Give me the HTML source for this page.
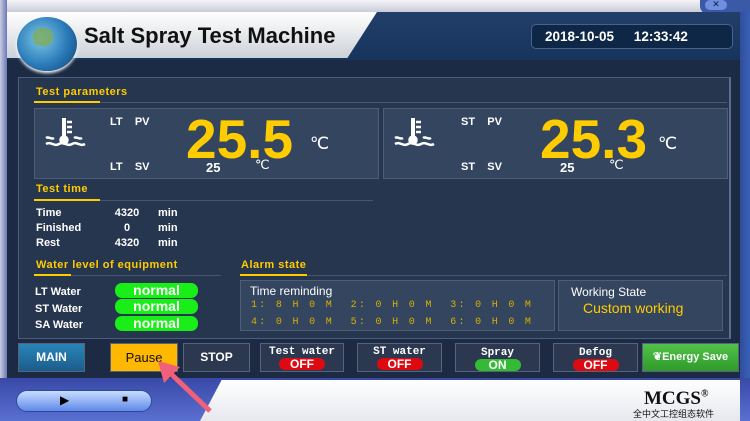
<!DOCTYPE html>
<html><head><style>
*{margin:0;padding:0;box-sizing:border-box}
body{width:750px;height:421px;overflow:hidden;background:#1c2a44;font-family:"Liberation Sans",sans-serif;position:relative}
.a{position:absolute}
.w{color:#fff;font-weight:bold;font-size:11px}
.y{color:#ffcc00;font-weight:bold;font-size:11px;letter-spacing:.5px}
.box{background:#34455f;border:1px solid #4d5d78}
.btn{position:absolute;top:343px;height:29px;background:#2b3850;border:1px solid #56637a;color:#fff;font-weight:bold;text-align:center}
.pill{position:absolute;left:115px;width:83px;height:15px;background:#19ee19;border-radius:7px;color:#fff;font-weight:bold;font-size:14px;line-height:15px;text-align:center}
.off{display:inline-block;width:46px;height:12px;border-radius:6px;background:#dd0a12;color:#fff;font-size:12px;line-height:12px;font-family:"Liberation Sans",sans-serif}
.sm{font-family:"Liberation Mono",monospace;font-size:11px;line-height:12px}
.am{position:absolute;font-size:10px;color:#d8b000;font-family:"Liberation Mono",monospace;letter-spacing:2.3px}
.big{position:absolute;font-size:55px;line-height:1;font-weight:bold;color:#ffcc00;top:112px}
</style></head><body>
<div class="a" style="left:0;top:0;width:750px;height:12px;background:linear-gradient(#f4f4f8,#c9ccd8)"></div>
<div class="a" style="left:700px;top:0;width:50px;height:14px;background:#3a5aa8;border-radius:0 0 0 8px"></div>
<div class="a" style="left:705px;top:0;width:22px;height:10px;background:#6f8ee0;border-radius:6px;color:#123;font-size:9px;text-align:center;line-height:9px">✕</div>
<div class="a" style="left:0;top:0;width:7px;height:385px;background:linear-gradient(90deg,#c8ccdf,#6b78b8)"></div>
<div class="a" style="left:740px;top:12px;width:10px;height:375px;background:linear-gradient(90deg,#2e4f9a,#3a5fb8)"></div>
<div class="a" style="left:7px;top:12px;width:733px;height:48px;background:linear-gradient(#213f6a,#16345c)"></div>
<div class="a" style="left:7px;top:12px;width:370px;height:46px;background:linear-gradient(#ffffff,#cdd2d8);clip-path:polygon(0 0,100% 0,92% 100%,0 100%)"></div>
<div class="a" style="left:17px;top:17px;width:60px;height:54px;border-radius:50%;background:radial-gradient(circle at 40% 40%,#7cc8e8,#2a7ab8 55%,#0d3f70);box-shadow:0 2px 3px #fff"></div>
<div class="a" style="left:33px;top:28px;width:20px;height:18px;border-radius:40%;background:#7eab5a;opacity:.8"></div>
<div class="a" style="left:84px;top:23px;font-size:22px;font-weight:bold;color:#111">Salt Spray Test Machine</div>
<div class="a" style="left:531px;top:24px;width:202px;height:25px;border:1px solid #4a6288;border-radius:5px;background:#0f2746;color:#fff;font-weight:bold;font-size:13.5px;line-height:23px;padding-left:13px;word-spacing:16px">2018-10-05 12:33:42</div>
<div class="a" style="left:18px;top:77px;width:713px;height:262px;background:#27364f;border:1px solid #4c5e80;border-right:2px solid #5a6c90"></div>
<div class="a y" style="left:36px;top:86px">Test parameters</div>
<div class="a" style="left:34px;top:101px;width:66px;height:2px;background:#ffcc00"></div>
<div class="a" style="left:100px;top:102px;width:627px;height:1px;background:#46566f"></div>
<div class="a box" style="left:34px;top:108px;width:345px;height:71px"></div>
<div class="a box" style="left:383px;top:108px;width:345px;height:71px"></div>
<svg class="a" style="left:44px;top:115px" width="46" height="36" viewBox="0 0 46 36" fill="none" stroke="#fff" stroke-width="2.5">
<path d="M20 3v22" stroke-width="4"/><circle cx="20" cy="25" r="3.5" fill="#fff"/><path d="M23 7h5M23 12h5M23 17h5"/>
<path d="M2 23c3-2 5 2 8 0M30 23c3-2 5 2 8 0M2 29c5-3 8 3 13 0s8 3 13 0 8 3 13 0"/></svg>
<svg class="a" style="left:393px;top:115px" width="46" height="36" viewBox="0 0 46 36" fill="none" stroke="#fff" stroke-width="2.5">
<path d="M20 3v22" stroke-width="4"/><circle cx="20" cy="25" r="3.5" fill="#fff"/><path d="M23 7h5M23 12h5M23 17h5"/>
<path d="M2 23c3-2 5 2 8 0M30 23c3-2 5 2 8 0M2 29c5-3 8 3 13 0s8 3 13 0 8 3 13 0"/></svg>
<div class="a w" style="left:110px;top:116px">LT&nbsp;&nbsp;&nbsp;&nbsp;PV</div>
<div class="a w" style="left:110px;top:161px">LT&nbsp;&nbsp;&nbsp;&nbsp;SV</div>
<div class="a w" style="left:461px;top:116px">ST&nbsp;&nbsp;&nbsp;&nbsp;PV</div>
<div class="a w" style="left:461px;top:161px">ST&nbsp;&nbsp;&nbsp;&nbsp;SV</div>
<div class="big" style="left:186px">25.5</div>
<div class="big" style="left:540px">25.3</div>
<div class="a" style="left:310px;top:134px;color:#fff;font-size:17px">℃</div>
<div class="a" style="left:658px;top:134px;color:#fff;font-size:17px">℃</div>
<div class="a w" style="left:206px;top:160px;font-size:13px">25</div>
<div class="a w" style="left:560px;top:160px;font-size:13px">25</div>
<div class="a" style="left:255px;top:157px;color:#fff;font-size:13px">℃</div>
<div class="a" style="left:609px;top:157px;color:#fff;font-size:13px">℃</div>
<div class="a y" style="left:36px;top:183px">Test time</div>
<div class="a" style="left:34px;top:199px;width:66px;height:2px;background:#ffcc00"></div>
<div class="a" style="left:100px;top:200px;width:273px;height:1px;background:#46566f"></div>
<div class="a w" style="left:36px;top:206px;line-height:15px">Time<br>Finished<br>Rest</div>
<div class="a w" style="left:110px;top:206px;line-height:15px;text-align:center;width:34px">4320<br>0<br>4320</div>
<div class="a w" style="left:158px;top:206px;line-height:15px">min<br>min<br>min</div>
<div class="a y" style="left:36px;top:259px">Water level of equipment</div>
<div class="a" style="left:34px;top:274px;width:37px;height:2px;background:#ffcc00"></div>
<div class="a" style="left:71px;top:275px;width:150px;height:1px;background:#46566f"></div>
<div class="a y" style="left:241px;top:259px">Alarm state</div>
<div class="a" style="left:240px;top:274px;width:67px;height:2px;background:#ffcc00"></div>
<div class="a" style="left:307px;top:275px;width:420px;height:1px;background:#46566f"></div>
<div class="a w" style="left:35px;top:284px;line-height:16.5px">LT Water<br>ST Water<br>SA Water</div>
<div class="pill" style="top:283px">normal</div>
<div class="pill" style="top:299px">normal</div>
<div class="pill" style="top:316px">normal</div>
<div class="a box" style="left:240px;top:280px;width:315px;height:51px"></div>
<div class="a w" style="left:250px;top:284px;font-weight:normal;font-size:12px">Time reminding</div>
<div class="am" style="left:251px;top:300px;white-space:pre">1: 8 H 0 M  2: 0 H 0 M  3: 0 H 0 M</div>
<div class="am" style="left:251px;top:317px;white-space:pre">4: 0 H 0 M  5: 0 H 0 M  6: 0 H 0 M</div>
<div class="a box" style="left:558px;top:280px;width:165px;height:51px"></div>
<div class="a" style="left:571px;top:285px;color:#fff;font-size:12px">Working State</div>
<div class="a" style="left:583px;top:300px;color:#ffcc00;font-size:14px">Custom working</div>
<div class="btn" style="left:18px;width:67px;background:linear-gradient(#2a85b8,#1b5c8c);line-height:27px;font-size:12px">MAIN</div>
<div class="btn" style="left:110px;width:68px;background:#ffb800;color:#111;font-weight:normal;line-height:27px;font-size:13px">Pause</div>
<div class="btn" style="left:183px;width:67px;line-height:27px;font-size:12px">STOP</div>
<div class="btn sm" style="left:260px;width:84px;padding-top:2px">Test water<br><span class="off">OFF</span></div>
<div class="btn sm" style="left:357px;width:85px;padding-top:2px">ST water<br><span class="off">OFF</span></div>
<div class="btn sm" style="left:455px;width:85px;padding-top:3px">Spray<br><span class="off" style="background:#33bb33">ON</span></div>
<div class="btn sm" style="left:553px;width:85px;padding-top:3px">Defog<br><span class="off">OFF</span></div>
<div class="btn" style="left:642px;width:97px;background:linear-gradient(#52c24a,#2e9a2a);line-height:27px;font-size:11px">❦Energy Save</div>
<div class="a" style="left:0;top:378px;width:750px;height:43px;background:linear-gradient(#3949a8,#5a70d0)"></div>
<div class="a" style="left:200px;top:380px;width:540px;height:41px;background:linear-gradient(#ffffff,#e6e8ee);clip-path:polygon(0 100%,4% 0,100% 0,100% 100%)"></div>
<div class="a" style="left:16px;top:390px;width:136px;height:22px;border-radius:11px;background:linear-gradient(#c9dcff,#5f8ae8);border:1px solid #2a4aa0"></div>
<div class="a" style="left:60px;top:393px;font-size:12px;color:#000">▶</div>
<div class="a" style="left:122px;top:394px;font-size:10px;color:#000">■</div>
<div class="a" style="left:644px;top:388px;font-family:'Liberation Serif',serif;font-weight:bold;font-size:19px;color:#111">MCGS<sup style="font-size:10px">®</sup></div>
<div class="a" style="left:633px;top:407px;font-size:9px;color:#111;font-family:'Liberation Sans','Noto Sans CJK SC',sans-serif">全中文工控组态软件</div>
<svg class="a" style="left:150px;top:355px" width="70" height="62"><path d="M60 56L18 16" stroke="#f0607a" stroke-width="5"/><path d="M8 6L30 12L14 28Z" fill="#f0607a"/></svg>
</body></html>
